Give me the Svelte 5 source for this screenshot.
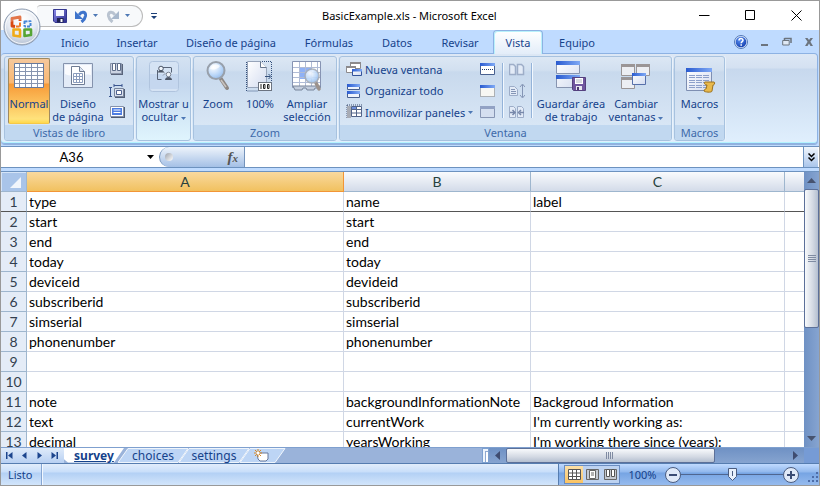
<script>
  const tabs = ['Inicio', 'Insertar', 'Diseño de página', 'Fórmulas', 'Datos', 'Revisar', 'Vista', 'Equipo'];
  const rows = [
    ['type', 'name', 'label'],
    ['start', 'start', ''],
    ['end', 'end', ''],
    ['today', 'today', ''],
    ['deviceid', 'devideid', ''],
    ['subscriberid', 'subscriberid', ''],
    ['simserial', 'simserial', ''],
    ['phonenumber', 'phonenumber', ''],
    ['', '', ''],
    ['', '', ''],
    ['note', 'backgroundInformationNote', 'Backgroud Information'],
    ['text', 'currentWork', "I'm currently working as:"],
    ['decimal', 'yearsWorking', "I'm working there since (years):"]
  ];
  let zoom = $state(50);
  let formula = $state('');
  let cellName = $state('A36');
</script>

<svg width="0" height="0" class="defs" aria-hidden="true">
  <defs>
    <linearGradient id="bar" x1="0" x2="1"><stop offset="0" stop-color="#2a5bd0" /><stop offset="1" stop-color="#7fa9f5" /></linearGradient>
    <linearGradient id="pane" x1="0" y1="0" x2="1" y2="1"><stop offset="0" stop-color="#fff" /><stop offset="1" stop-color="#d3dcf0" /></linearGradient>
    <linearGradient id="floppy" x1="0" y1="0" x2="1" y2="1"><stop offset="0" stop-color="#8d8bea" /><stop offset="1" stop-color="#2b2d8c" /></linearGradient>
    <radialGradient id="lens" cx=".35" cy=".3" r=".8"><stop offset="0" stop-color="#fff" /><stop offset=".6" stop-color="#b9d6f8" /><stop offset="1" stop-color="#8fb6e6" /></radialGradient>
    <radialGradient id="orb" cx=".5" cy=".3" r=".75"><stop offset="0" stop-color="#fff" /><stop offset=".55" stop-color="#e6ebf3" /><stop offset="1" stop-color="#a9b7cc" /></radialGradient>
    <radialGradient id="help" cx=".4" cy=".3" r=".8"><stop offset="0" stop-color="#5c93f5" /><stop offset="1" stop-color="#0d37a8" /></radialGradient>
  </defs>
</svg>

{#snippet arrow()}
  <svg class="arrow" width="5" height="3" viewBox="0 0 5 3" aria-hidden="true"><path d="M0 0h5L2.500 3z" fill="currentColor" /></svg>
{/snippet}

{#snippet lensIcon()}
  <path d="M18 19l6 9" stroke="#8d8784" stroke-width="4" stroke-linecap="round" />
  <path d="M18 20l5 7" stroke="#c9c4c0" stroke-width="1.500" />
  <circle cx="13" cy="10.500" r="8.500" fill="url(#lens)" stroke="#98a0ab" stroke-width="2" />
  <path d="M7 9c1-4 6-6 10-3-2 3-6 4-10 3z" fill="#fff" opacity=".7" />
{/snippet}

<div class="window">
  <header class="title">
    <div class="quick">
      <button aria-label="Guardar">
        <svg width="14" height="14" viewBox="0 0 14 14"><path d="M.5.5h13v13H2L.5 12z" fill="url(#floppy)" stroke="#34368f" /><path d="M3 1h8v6H3z" fill="#f5f7ff" /><path d="M4 9h6.500v4.500H4z" fill="#1e2050" /><path d="M7.500 10h2v3h-2z" fill="#fff" /></svg>
      </button>
      <button aria-label="Deshacer">
        <svg width="14" height="14" viewBox="0 0 14 14"><path d="M5 6C8 1.500 12 3 11.500 7c-.4 2.500-1.500 4-4 6" fill="none" stroke="#3e74cb" stroke-width="3" /><path d="M1 2v8h8z" fill="#3e74cb" /></svg>
      </button>
      <button class="drop" aria-label="Opciones de deshacer">{@render arrow()}</button>
      <button aria-label="Rehacer">
        <svg width="14" height="14" viewBox="0 0 14 14"><path d="M9 6C6 1.500 2 3 2.500 7c.4 2.500 1.500 4 4 6" fill="none" stroke="#b9c3d0" stroke-width="3" /><path d="M13 2v8H5z" fill="#a8b8cc" /></svg>
      </button>
      <button class="drop off" aria-label="Opciones de rehacer">{@render arrow()}</button>
    </div>
    <button class="more" aria-label="Personalizar barra">
      <svg width="6" height="6" viewBox="0 0 6 6"><path d="M0 0h6v1H0zM0 3h6L3 6z" fill="#1d3f77" /></svg>
    </button>
    <h1>BasicExample.xls - Microsoft Excel</h1>
    <div class="controls">
      <button aria-label="Minimizar"><svg width="11" height="11" viewBox="0 0 11 11"><path d="M0 5.500h10.500" stroke="#000" /></svg></button>
      <button aria-label="Maximizar"><svg width="11" height="11" viewBox="0 0 11 11"><path d="M.5.500h9v9h-9z" fill="none" stroke="#000" /></svg></button>
      <button aria-label="Cerrar"><svg width="11" height="11" viewBox="0 0 11 11"><path d="M.5.500l10 10M10.500.500l-10 10" stroke="#000" /></svg></button>
    </div>
  </header>

  <button class="office" aria-label="Botón de Office">
    <svg width="38" height="38" viewBox="0 0 38 38">
      <circle cx="19" cy="19" r="18" fill="url(#orb)" stroke="#8d9bb0" />
      <circle cx="19" cy="19" r="16.500" fill="none" stroke="#fff" opacity=".8" />
      <g fill="none" stroke-linejoin="round">
        <path d="M12 18.500l-3-.5v-7.500l8-1.500v4" stroke="#d9480f" stroke-width="2.800" />
        <path d="M13 18.500h4v-4" stroke="#ef7a26" stroke-width="2" />
        <path d="M21.500 13.500l6-.5v5.500h-6z" stroke="#4687d6" stroke-width="2" stroke-dasharray="3 1" />
        <path d="M10.500 21.500h6.500v7l-6.500-1z" stroke="#f0aa17" stroke-width="2.600" />
        <path d="M21.500 21.500h6.500V27l-6.500 1z" stroke="#56a534" stroke-width="2.600" />
      </g>
      <path d="M19 17v5M16.500 19.500h5" stroke="#fff" stroke-width="1.500" />
      <path d="M5 15c4-13 24-13 28 0-9-4-19-4-28 0z" fill="#fff" opacity=".25" />
    </svg>
  </button>

  <nav class="tabs">
    {#each tabs as tab}
      <button class:active={tab === 'Vista'}>{tab}</button>
    {/each}
    <div class="mdi">
      <button aria-label="Ayuda">
        <svg width="14" height="14" viewBox="0 0 14 14"><circle cx="7" cy="7" r="6.500" fill="#dbe8fa" stroke="#5279b8" /><circle cx="7" cy="7" r="5.300" fill="url(#help)" /><path d="M5 5.500C5 3 9 3 9 5.300 9 6.700 7.200 6.700 7.200 8.300M7.200 9.300v1.400" fill="none" stroke="#fff" stroke-width="1.500" /></svg>
      </button>
      <button aria-label="Minimizar libro"><svg width="10" height="10" viewBox="0 0 10 10"><path d="M1 7h7v2H1z" fill="#6c747e" /></svg></button>
      <button aria-label="Restaurar libro"><svg width="10" height="10" viewBox="0 0 10 10"><path d="M2.500 1.500h6.500v4.500M2.500 1v2" fill="none" stroke="#6c747e" stroke-width="1.500" /><path d="M.7 3.500h6.500v4.500H.7z" fill="#dfe9f5" stroke="#6c747e" /></svg></button>
      <button aria-label="Cerrar libro"><svg width="10" height="10" viewBox="0 0 10 10"><path d="M1 1h2.500L5 3 6.500 1H9L6.400 4.700 9 9H6.500L5 6.500 3.500 9H1l2.600-4.300z" fill="#6c747e" /></svg></button>
    </div>
  </nav>

  <div class="ribbon">
    <section class="group views">
      <div class="items">
        <button class="big on">
          <svg width="32" height="32" viewBox="0 0 32 32"><path d="M1.500 2.500h29v24h-29z" fill="#fff" stroke="#66799c" /><path d="M2 6.500h28M2 10.500h28M2 14.500h28M2 18.500h28M2 22.500h28M6.500 3v23M12.500 3v23M18.500 3v23M24.500 3v23" stroke="#8795b0" /></svg>
          <span>Normal</span>
        </button>
        <button class="big wide">
          <svg width="32" height="32" viewBox="0 0 32 32"><path d="M1.500 2.500h29v24h-29z" fill="#e3ebf7" stroke="#8593ad" /><path d="M3 4h26v10C20 12 10 17 3 13z" fill="#fff" opacity=".8" /><path d="M9.500 5.500h8l5 5v13h-13z" fill="#fff" stroke="#6f7c94" /><path d="M17.500 5.500v5h5" fill="#dde5f2" stroke="#6f7c94" /><path d="M11.500 12.500h9v9h-9zM11.500 15.500h9M11.500 18.500h9M14.500 12.500v9M17.500 12.500v9" fill="none" stroke="#8b9cbd" /></svg>
          <span>Diseño<br />de página</span>
        </button>
        <div class="stack">
          <button aria-label="Vista previa de salto de página"><svg width="16" height="16" viewBox="0 0 16 16"><path d="M2 3h12v11H2z" fill="#59647a" /><path d="M1.500 2.500h11v10h-11z" fill="#cbd3e2" stroke="#8994aa" /><path d="M3.500 2.500h3v7h-3zM8.500 2.500h3v7h-3z" fill="#fff" stroke="#5d6c88" /></svg></button>
          <button aria-label="Vistas personalizadas"><svg width="16" height="16" viewBox="0 0 16 16"><path d="M0 4.500h3M1.500 4v9M0 13.500h3M5 2.500h8M5 1v3M13 1v3" fill="none" stroke="#3c5790" /><path d="M6 6h10v9H6z" fill="#525f76" /><path d="M5.500 5.500h9v8h-9z" fill="#dbe2ee" stroke="#77849c" /><path d="M7.500 7.500h5v4h-5z" fill="#fff" stroke="#4f6390" /></svg></button>
          <button aria-label="Pantalla completa"><svg width="16" height="16" viewBox="0 0 16 16"><path d="M2 3h14v11H2z" fill="#4e5b72" /><path d="M1.500 2.500h13v10h-13z" fill="#fff" stroke="#8692ab" /><path d="M3 4h10v7H3z" fill="#4d7de2" /><path d="M4.500 6h7M4.500 8.500h7" stroke="#fff" /></svg></button>
        </div>
      </div>
      <h2>Vistas de libro</h2>
    </section>

    <section class="group show">
      <button class="big">
        <svg width="32" height="32" viewBox="0 0 32 32"><rect x="1.500" y=".5" width="29" height="30" rx="3" fill="#d5e3f4" stroke="#b0c4de" /><path d="M2 13h28v15H2z" fill="#bdd2ec" opacity=".7" /><path d="M9.500 9v9.500h4M23.500 6.500v5M14 6.500h9" fill="none" stroke="#586478" /><circle cx="13" cy="7.500" r="2.300" fill="#eef3f9" stroke="#4c5668" /><path d="M10 11.500c0-3 6-3 6 0z" fill="#4b5463" /><circle cx="20.500" cy="13.500" r="2.300" fill="#eef3f9" stroke="#7a8290" /><path d="M17 19c0-4 7-4 7 0z" fill="#4d5666" /><path d="M15 10.500l2 2-2 2" fill="none" stroke="#8b94a4" /></svg>
        <span>Mostrar u<br />ocultar {@render arrow()}</span>
      </button>
    </section>

    <section class="group zoomgroup">
      <div class="items">
        <button class="big"><svg width="32" height="32" viewBox="0 0 32 32"><g transform="translate(1 -1)">{@render lensIcon()}</g></svg><span>Zoom</span></button>
        <button class="big">
          <svg width="32" height="32" viewBox="0 0 32 32"><path d="M2.500 1v29H14M14 .5h13.500V20" fill="none" stroke="#35507c" stroke-dasharray="1 1" /><path d="M3.500.5h13l6 6v20h-19z" fill="url(#pane)" stroke="#97a4b9" /><path d="M16.500.5v6h6" fill="#fff" stroke="#68788f" /><path d="M21 15.500h5M24.500 13l2.500 2.500-2.500 2.500" fill="none" stroke="#35507c" /><rect x="14.500" y="21.500" width="13" height="8" fill="#fff" stroke="#6b7380" /><path d="M17 23v5M19.500 23.500H21v4h-1.500zM23.500 23.500H25v4h-1.500z" fill="none" stroke="#222" /></svg>
          <span>100%</span>
        </button>
        <button class="big wide">
          <svg width="32" height="32" viewBox="0 0 32 32"><path d="M1.500.5h28v26h-28z" fill="#fff" stroke="#8794b3" /><path d="M8 6h13v12H8z" fill="#8fb1f6" /><path d="M2 6.500h27M2 11.500h27M2 16.500h27M2 21.500h27M8.500 1v25M14.500 1v25M20.500 1v25M26.500 1v25" stroke="#b0bcd6" /><path d="M2 25h27v2h-5l-1 2h-7l-1-2h-3l-1 2H4z" fill="#c3cddd" stroke="#78859b" /><path d="M25 22l3 6" stroke="#9c928c" stroke-width="3.500" stroke-linecap="round" /><circle cx="21" cy="15" r="7" fill="url(#lens)" stroke="#a6adb8" stroke-width="1.500" opacity=".9" /></svg>
          <span>Ampliar<br />selección</span>
        </button>
      </div>
      <h2>Zoom</h2>
    </section>

    <section class="group windows">
      <div class="items">
        <div class="stack text">
          <button><svg width="16" height="16" viewBox="0 0 16 16"><path d="M4.500 1.500h10v6h-10z" fill="#fff" stroke="#8c8a8c" /><path d="M4 1h11v2H4z" fill="#8c8a8c" /><path d="M.5 5.500h9v6h-9z" fill="#fff" stroke="#8c8a8c" /><path d="M0 5h10v2H0z" fill="#8c8a8c" /><path d="M6.500 8.500h9v6h-9z" fill="url(#pane)" stroke="#34549b" /><path d="M6 8h10v2.500H6z" fill="url(#bar)" /></svg>Nueva ventana</button>
          <button><svg width="16" height="16" viewBox="0 0 16 16"><path d="M1.500 1.500h12v5h-12zM1.500 8.500h12v6h-12z" fill="#eef3fc" stroke="#49608f" /><path d="M1 1h13v3H1zM1 8h13v3H1z" fill="url(#bar)" /></svg>Organizar todo</button>
          <button><svg width="16" height="16" viewBox="0 0 16 16"><path d="M1 1h15M1 1v14" stroke="#3c4d70" stroke-dasharray="1 1" /><path d="M1 2h4v12H1z" fill="#a8acb5" /><path d="M5.500 2.500h10v10h-10zM5.500 5.500h10M5.500 9h10M10.500 2.500v10" fill="#fff" stroke="#526488" /><path d="M6 3h4v2H6z" fill="#6e8fdc" /></svg>Inmovilizar paneles {@render arrow()}</button>
        </div>
        <div class="stack">
          <button aria-label="Dividir"><svg width="16" height="16" viewBox="0 0 16 16"><path d="M.5 2.500h14v11H.5z" fill="#fff" stroke="#48608f" /><path d="M0 2h15v3H0z" fill="url(#bar)" /><path d="M2 8.500h12" stroke="#233d70" stroke-dasharray="1 1" /></svg></button>
          <button aria-label="Ocultar"><svg width="16" height="16" viewBox="0 0 16 16"><path d="M.5 2.500h14v11H.5z" fill="#f7f7f3" stroke="#777" stroke-dasharray="1 1" /><path d="M0 2h15v3H0z" fill="url(#bar)" /></svg></button>
          <button aria-label="Mostrar" disabled><svg width="16" height="16" viewBox="0 0 16 16"><path d="M.5 2.500h14v11H.5z" fill="#d4dff0" stroke="#8796b4" /><path d="M0 2h15v3H0z" fill="#92a2c4" /></svg></button>
        </div>
        <hr />
        <div class="stack">
          <button aria-label="Ver en paralelo" disabled><svg width="16" height="16" viewBox="0 0 16 16"><path d="M.5 3.500h4l2 2v8h-6zM8.500 3.500h4l2 2v8h-6z" fill="#e3ebf7" stroke="#9dadc8" stroke-width="1.500" /></svg></button>
          <button aria-label="Desplazamiento sincrónico" disabled><svg width="16" height="16" viewBox="0 0 16 16"><path d="M.5 3.500h5l3 3v6h-8z" fill="#e3ebf7" stroke="#9dadc8" /><path d="M2 6.500h4M2 8.500h5M2 10.500h5M11 4l2.500-3L16 4M11 12l2.500 3 2.500-3M13.500 2v12" fill="none" stroke="#8495b5" /></svg></button>
          <button aria-label="Restablecer posición" disabled><svg width="16" height="16" viewBox="0 0 16 16"><path d="M.5 2.500h4l2 2v9h-6zM8.500 2.500h4l2 2v9h-6z" fill="#e3ebf7" stroke="#9dadc8" /><path d="M1 8.500h4M3.500 6L6 8.500 3.500 11M15 8.500h-4M12 6L9.500 8.500 12 11" fill="none" stroke="#7788aa" stroke-width="1.500" /></svg></button>
        </div>
        <hr />
        <button class="big area">
          <svg width="32" height="32" viewBox="0 0 32 32"><path d="M1.500.5h23v12h-23zM1.500 14.500h23v12h-23z" fill="url(#pane)" stroke="#8794b0" /><path d="M1 0h24v4H1zM1 14h24v4H1z" fill="url(#bar)" /><path d="M17.500 16.500h13v13h-12l-1-1z" fill="#70569f" stroke="#54407e" /><path d="M20 17h8v6h-8z" fill="#fff" /><path d="M21 19h6M21 21h6" stroke="#b2b6c2" /><path d="M21 25h6v4h-6z" fill="#e8e8f0" /><path d="M22 26h2v3h-2z" fill="#4b3970" /></svg>
          <span>Guardar área<br />de trabajo</span>
        </button>
        <button class="big switch">
          <svg width="32" height="32" viewBox="0 0 32 32"><path d="M1.500 3.500h13v11h-13zM16.500 3.500h13v11h-13zM1.500 16.500h13v11h-13z" fill="#eceef3" stroke="#9a9596" /><path d="M1 3h14v3H1zM16 3h14v3H16zM1 16h14v3H1z" fill="#9a9596" /><path d="M12.500 12.500h13v11h-13z" fill="url(#pane)" stroke="#5770aa" /><path d="M12 12h14v3H12z" fill="url(#bar)" /></svg>
          <span>Cambiar<br />ventanas {@render arrow()}</span>
        </button>
      </div>
      <h2>Ventana</h2>
    </section>

    <section class="group macros">
      <div class="items">
        <button class="big">
          <svg width="32" height="32" viewBox="0 0 32 32"><path d="M2.500 7.500h25v22h-25z" fill="url(#pane)" stroke="#7e8fb2" /><path d="M2 7h26v4H2z" fill="url(#bar)" /><path d="M5 14.500h20M5 16.500h20M5 19.500h20M5 21.500h20M5 24.500h20M5 26.500h20" stroke="#8c9fca" stroke-dasharray="6 1" /><path d="M21 21h9c1 0 1 3-1 3l-1 6c0 2-8 1-8 0 0-2 2-2 2-2l1-4c-3 0-3-3-2-3z" fill="#e8b94c" stroke="#9a711e" /></svg>
          <span>Macros<br />{@render arrow()}</span>
        </button>
      </div>
      <h2>Macros</h2>
    </section>
  </div>

  <div class="formula">
    <div class="namebox">
      <input aria-label="Cuadro de nombres" bind:value={cellName} />
      <button aria-label="Lista de nombres"><svg width="7" height="4" viewBox="0 0 7 4"><path d="M0 0h7L3.500 4z" /></svg></button>
    </div>
    <div class="fx"><i class="knob"></i><button aria-label="Insertar función"><i>f</i><small>x</small></button></div>
    <input class="entry" aria-label="Barra de fórmulas" bind:value={formula} />
    <button class="expand" aria-label="Expandir barra de fórmulas"><svg width="7" height="9" viewBox="0 0 7 9"><path d="M.5.500l3 3 3-3M.5 4.500l3 3 3-3" fill="none" stroke="#000" stroke-width="1.500" /></svg></button>
  </div>

  <main class="body">
    <div class="sheet">
      <table>
        <colgroup><col class="c0" /><col class="ca" /><col class="cb" /><col class="cc" /><col /></colgroup>
        <thead>
          <tr>
            <th class="corner" aria-label="Seleccionar todo"><svg width="12" height="12" viewBox="0 0 12 12"><path d="M11 0v11H0z" fill="#f1f5fb" /></svg></th>
            <th class="sel">A</th><th>B</th><th>C</th><th aria-label="D"></th>
          </tr>
        </thead>
        <tbody>
          {#each rows as row, i}
            <tr class:frozen={i === 0}>
              <th>{i + 1}</th>
              {#each row as cell}<td>{cell}</td>{/each}
              <td></td>
            </tr>
          {/each}
        </tbody>
      </table>
    </div>
    <div class="vscroll">
      <button aria-label="Arriba"><svg width="9" height="5" viewBox="0 0 9 5"><path d="M0 5h9L4.500 0z" fill="#47536f" /></svg></button>
      <div class="thumb"><i></i></div>
      <div class="space"></div>
      <button aria-label="Abajo"><svg width="9" height="5" viewBox="0 0 9 5"><path d="M0 0h9L4.500 5z" fill="#47536f" /></svg></button>
    </div>
  </main>

  <div class="bottom">
    <div class="nav">
      <button aria-label="Primera hoja"><svg width="7" height="7" viewBox="0 0 7 7"><path d="M0 0h1.500v7H0zM6.500 0v7L2 3.500z" /></svg></button>
      <button aria-label="Hoja anterior"><svg width="7" height="7" viewBox="0 0 7 7"><path d="M5.500 0v7L1 3.500z" /></svg></button>
      <button aria-label="Hoja siguiente"><svg width="7" height="7" viewBox="0 0 7 7"><path d="M1.500 0v7L6 3.500z" /></svg></button>
      <button aria-label="Última hoja"><svg width="7" height="7" viewBox="0 0 7 7"><path d="M5.500 0H7v7H5.500zM.5 0v7L5 3.500z" /></svg></button>
    </div>
    <div class="sheets">
      <button class="current"><svg viewBox="0 0 60 16" preserveAspectRatio="none"><path d="M0 0h60L50 15.500H4L0 12z" fill="#fff" /></svg><span>survey</span></button>
      <button><svg viewBox="0 0 70 16" preserveAspectRatio="none"><path d="M10 .5h60L60 15.500H0z" fill="#bdd5f5" stroke="#f4f8fd" /></svg><span>choices</span></button>
      <button><svg viewBox="0 0 70 16" preserveAspectRatio="none"><path d="M10 .5h60L60 15.500H0z" fill="#bdd5f5" stroke="#f4f8fd" /></svg><span>settings</span></button>
      <button class="new" aria-label="Insertar hoja">
        <svg viewBox="0 0 46 16" preserveAspectRatio="none"><path d="M10 .5h35L35 15.500H0z" fill="#bdd5f5" stroke="#f4f8fd" /></svg>
        <svg class="glyph" width="15" height="13" viewBox="0 0 15 13"><path d="M3 4h11v6l-2 2H6l-2-2z" fill="#fff" stroke="#66789b" /><path d="M4 0v8M0 4h8M1 1l6 6M7 1L1 7" stroke="#d98a27" /><circle cx="4" cy="4" r="1.500" fill="#fff" /></svg>
      </button>
    </div>
    <div class="split"></div>
    <div class="hscroll">
      <button aria-label="Izquierda"><svg width="5" height="9" viewBox="0 0 5 9"><path d="M5 0v9L0 4.500z" fill="#3f4c70" /></svg></button>
      <div class="thumb"><i></i></div>
      <div class="space"></div>
      <button aria-label="Derecha"><svg width="5" height="9" viewBox="0 0 5 9"><path d="M0 0v9l5-4.500z" fill="#3f4c70" /></svg></button>
    </div>
    <div class="end"></div>
  </div>

  <footer class="status">
    <span class="ready">Listo</span>
    <div class="tools">
      <div class="modes">
        <button class="on" aria-label="Normal"><svg width="13" height="11" viewBox="0 0 13 11"><path d="M.5.500h12v10H.5zM.5 4h12M.5 7.500h12M4.500.500v10M8.500.500v10" fill="#fff" stroke="#555" /></svg></button>
        <button aria-label="Diseño de página"><svg width="13" height="11" viewBox="0 0 13 11"><path d="M.5.500h12v10H.5z" fill="#c4c9d1" stroke="#666" /><path d="M3.500 1.500h6v8h-6z" fill="#fff" stroke="#666" /><path d="M5 4h3M5 6h3" stroke="#666" /></svg></button>
        <button aria-label="Salto de página"><svg width="13" height="11" viewBox="0 0 13 11"><path d="M.5.500h12v10H.5z" fill="#c4c9d1" stroke="#666" /><path d="M2.500.500h3v7h-3zM7.500.500h3v7h-3z" fill="#fff" stroke="#555" /></svg></button>
      </div>
      <button class="percent">100%</button>
      <button class="round" aria-label="Alejar"><svg width="16" height="16" viewBox="0 0 16 16"><circle cx="8" cy="8" r="7.500" fill="#dfe9f8" stroke="#4a5c80" /><path d="M4 8h8" stroke="#3a4c74" stroke-width="2" /></svg></button>
      <input type="range" aria-label="Zoom" min="0" max="100" bind:value={zoom} />
      <button class="round" aria-label="Acercar"><svg width="16" height="16" viewBox="0 0 16 16"><circle cx="8" cy="8" r="7.500" fill="#dfe9f8" stroke="#4a5c80" /><path d="M4 8h8M8 4v8" stroke="#3a4c74" stroke-width="2" /></svg></button>
      <svg class="grip" width="11" height="11" viewBox="0 0 11 11" aria-hidden="true"><path d="M8 0h2v2H8zM4 4h2v2H4zM8 4h2v2H8zM0 8h2v2H0zM4 8h2v2H4zM8 8h2v2H8z" fill="#4d6da8" /></svg>
    </div>
  </footer>
</div>

<style>
  :global(body) { overflow: hidden; }
  * { box-sizing: border-box; }
  button, input { font: inherit; color: inherit; margin: 0; padding: 0; border: 0; background: none; min-width: 0; }
  h1, h2 { margin: 0; font-size: inherit; font-weight: normal; }
  svg { display: block; flex: none; }
  .defs { position: absolute; }
  .window {
    position: relative; display: flex; flex-direction: column; height: 100vh;
    border: 1px solid #999; background: #bfdbff; overflow: hidden;
    font: 11px/16px "Noto Sans", "Open Sans", sans-serif; color: #15428b;
  }

  .title { display: flex; align-items: center; height: 29px; background: #fff; color: #000; flex: none; }
  .quick {
    display: flex; align-items: center; gap: 7px; height: 22px; width: 106px; margin-left: 36px; padding-left: 16px;
    border: 1px solid #bbb; border-left: 0; border-radius: 4px 12px 12px 0; background: #f7f9fb;
  }
  .quick .drop { margin: 0 1px 0 -2px; color: #4a78b8; }
  .quick .drop.off { color: #b5b5b5; margin-left: -2px; }
  .more { margin-left: 8px; }
  h1 { flex: 1; padding-left: 165px; white-space: nowrap; }
  .controls { display: flex; }
  .controls button { width: 46px; height: 28px; display: grid; place-items: center; }

  .office { position: absolute; left: 2px; top: 7px; z-index: 2; }

  .tabs { display: grid; grid-template-columns: 56px 68px 120px 76px 60px 66px 50px 68px 1fr; height: 23px; padding-left: 46px; flex: none; }
  .tabs > button { white-space: nowrap; padding-top: 2px; }
  .tabs .active { border: 1px solid #8db2e3; border-bottom: 0; border-radius: 4px 4px 0 0; background: linear-gradient(#fff, #e3edf9); box-shadow: inset 1px 1px #b9f1fb, inset -1px 0 #b9f1fb; margin-bottom: -1px; z-index: 1; padding-top: 0; }
  .mdi { display: flex; justify-content: flex-end; align-items: center; gap: 12px; padding-right: 5px; }

  .ribbon {
    display: flex; gap: 2px; height: 91px; padding: 2px 3px; flex: none; margin-right: 1px;
    border: 1px solid #8db2e3; border-left-width: 0; border-radius: 4px; box-shadow: inset 0 -1px #b4f4ff, 0 1px #92b2dc;
    background: linear-gradient(#dde8f5 0, #d4e1f1 14px, #c7d8ed 15px, #e0effd 100%);
    line-height: 13px;
  }
  .group {
    display: flex; flex-direction: column; flex: none; height: 85px; overflow: hidden;
    border: 1px solid #a7c2df; border-radius: 3px; box-shadow: 1px 0 #e9f2fb;
    background: linear-gradient(#dce7f4 0, #d2e0f0 13px, #c8d9ed 15px, #d8e6f5 68px);
  }
  .group h2 { margin-top: auto; height: 16px; line-height: 15px; text-align: center; background: #c1d8f0; color: #3e6aaa; }
  .views { width: 130px; }
  .show { width: 55px; background: linear-gradient(#d4e2f2 0, #c4d7ee 26px, #dff4fd); }
  .zoomgroup { width: 144px; }
  .windows { width: 333px; }
  .macros { width: 51px; }
  .items { display: flex; height: 68px; padding: 1px 3px; }
  .show .big { margin-top: 1px; width: 100%; }
  .big { display: flex; flex-direction: column; align-items: center; width: 42px; height: 66px; padding-top: 3px; flex: none; white-space: nowrap; }
  .big span { margin-top: 4px; text-align: center; }
  .big.wide { width: 52px; }
  .big.on { border: 1px solid #a08a60; border-bottom-color: #f5c84a; padding-top: 2px; border-radius: 2px; background: linear-gradient(#f5c89c, #f9b873 24px, #f79a38 25px, #ffe27c 60px, #ffd84a); }
  .views .wide { margin-left: 2px; }
  .big .arrow, .stack .arrow { display: inline-block; vertical-align: middle; }
  .arrow { color: #4d78b5; }
  .macros .items { padding: 1px 0; }
  .macros .big { width: 49px; }
  .big.area { width: 72px; margin-left: 2px; }
  .big.switch { width: 58px; }
  .stack { display: flex; flex-direction: column; justify-content: space-between; margin-left: 5px; padding: 3px 0 4px; height: 66px; flex: none; }
  .stack button { display: flex; align-items: center; gap: 3px; height: 16px; white-space: nowrap; }
  .stack.text { width: 129px; margin-left: 3px; }
  hr { width: 2px; height: 55px; margin: 5px 0 0 6px; border: 0; border-left: 1px solid #94b3d9; background: #f2f8ff; flex: none; }

  .formula { display: flex; height: 22px; margin-top: 2px; border: solid #6d92bf; border-width: 1px 0; background: #fff; flex: none; color: #000; font-family: Lato, sans-serif; font-size: 13px; }
  .namebox { display: flex; width: 158px; }
  .namebox input { width: 141px; text-align: center; }
  .namebox button { width: 17px; display: grid; place-items: center; }
  .fx { display: flex; justify-content: space-between; align-items: center; width: 86px; padding: 0 6px 0 5px; border: 1px solid #7493bb; border-width: 0 1px; border-radius: 10px 0 0 10px; background: linear-gradient(#eef4fb, #a4c0e6); }
  .knob { width: 8px; height: 8px; border-radius: 50%; background: linear-gradient(135deg, #9da3ad, #fff); }
  .fx button { font: bold 15px/16px "Liberation Serif", serif; color: #555; }
  .fx small { font-size: 11px; font-style: italic; }
  .entry { flex: 1; padding: 0 4px; outline: none; }
  .expand { width: 15px; margin-right: 1px; display: grid; place-items: center; border-left: 1px solid #6d92bf; background: linear-gradient(#f1f6fc, #a9c5eb); }

  .body { display: flex; flex: 1; min-height: 0; margin-top: 3px; border-top: 1px solid #6d92bf; }
  .sheet { flex: 1; min-width: 0; overflow: hidden; background: #fff; }
  table { width: 100%; table-layout: fixed; border-collapse: separate; border-spacing: 0; font: 14px/19px Lato, sans-serif; font-variant-ligatures: none; color: #000; }
  .c0 { width: 26px; }
  .ca { width: 317px; }
  .cb { width: 187px; }
  .cc { width: 254px; }
  td, th { height: 20px; padding: 0 2px; font-weight: normal; white-space: nowrap; border: solid #d0d7e5; border-width: 0 1px 1px 0; }
  tbody th { background: #e4ecf7; border-color: #9eb6ce; padding: 0; color: #333f4f; }
  thead th { background: linear-gradient(#f9fbfd, #d3dbe9); border-color: #9eb6ce; color: #27413e; }
  thead .sel { background: linear-gradient(#f9d99f, #f1c15f); border-color: #f29536; }
  thead .corner { background: #a9c4e9; box-shadow: inset 1px 1px #d5e4f7; padding: 3px 4px 0 9px; }
  .frozen td, .frozen th { border-bottom-color: #555; }
  td:last-child, th:last-child { border-right: 0; }

  .vscroll { display: flex; flex-direction: column; width: 15px; background: linear-gradient(90deg, #6f91c4, #86a4d0); flex: none; }
  .vscroll button { height: 17px; display: grid; place-items: center; flex: none; }
  .thumb { display: grid; place-items: center; border: 1px solid #5c7099; border-radius: 2px; }
  .vscroll .thumb { flex: 138; background: linear-gradient(90deg, #f8fafc, #d3d9e3 60%, #b4bfd0); }
  .vscroll .space { flex: 103; }
  .vscroll i { width: 8px; height: 7px; background: repeating-linear-gradient(#7f8ba2 0 1px, transparent 1px 2px); }

  .bottom { display: flex; height: 16px; border-top: 1px solid #7fa0cf; background: #9ab3da; flex: none; font: 12px/15px "Noto Sans", sans-serif; }
  .nav { display: flex; width: 63px; padding-left: 1px; background: linear-gradient(#dfebfa, #b8d0f2); fill: #1c458d; }
  .nav button { width: 15px; display: grid; place-items: center; }
  .sheets { display: flex; flex: 1; min-width: 0; }
  .sheets button { position: relative; flex: none; width: 70px; margin-right: -9px; }
  .sheets .current { width: 60px; margin-right: -6px; font-weight: bold; text-decoration: underline; z-index: 1; }
  .sheets svg { position: absolute; inset: 0; width: 100%; height: 100%; }
  .sheets span { position: relative; }
  .sheets .new { width: 46px; margin: 0; }
  .sheets .glyph { inset: 1px auto auto 14px; width: 15px; height: 13px; }
  .split { width: 7px; border: 1px solid #7da0d0; background: #fff; box-shadow: inset 2px 2px #eef4fc, inset 3px 3px #8fa9d0; }
  .hscroll { display: flex; width: 315px; background: linear-gradient(#6f91c4, #86a4d0); }
  .hscroll button { width: 17px; display: grid; place-items: center; flex: none; }
  .hscroll .thumb { flex: 208; background: linear-gradient(#f8fafc, #d3d9e3 60%, #b4bfd0); }
  .hscroll .space { flex: 73; }
  .hscroll i { width: 8px; height: 7px; background: repeating-linear-gradient(90deg, #7f8ba2 0 1px, transparent 1px 2px); }
  .end { width: 15px; background: #769bd5; }

  .status { display: flex; justify-content: space-between; height: 22px; border-top: 1px solid #567db0; background: linear-gradient(#e2edfb, #c8defa 8px, #b3d0f5 9px, #d2e5fb); flex: none; line-height: 21px; }
  .ready { width: 41px; padding-left: 7px; border-right: 1px solid #86a6d3; box-shadow: 1px 0 #f2f8ff; }
  .tools { display: flex; align-items: center; width: 261px; padding-left: 5px; border-left: 1px solid #567db0; background: linear-gradient(#c0daff, #91b8ed 8px, #76a4e3 9px, #96bbee); }
  .modes { display: flex; border: 1px solid #6a8cc0; height: 19px; }
  .modes button { width: 18px; display: grid; place-items: center; background: #bdd2f0; }
  .modes .on { background: linear-gradient(#fbe0a8, #fbc362); }
  .percent { width: 45px; text-align: center; }
  input[type='range'] { -webkit-appearance: none; appearance: none; width: 102px; height: 16px; flex: none; background: linear-gradient(#4f6690, #4f6690) center / 100% 1px no-repeat; }
  input[type='range']::-webkit-slider-thumb {
    -webkit-appearance: none; width: 9px; height: 13px;
    background: url("data:image/svg+xml,%3Csvg xmlns='http://www.w3.org/2000/svg' width='9' height='13'%3E%3Cpath d='M.5.5h8v8l-4 4-4-4z' fill='%23e8f0fb' stroke='%234a5c80'/%3E%3Cpath d='M4.500 3v5' stroke='%234a5c80'/%3E%3C/svg%3E") no-repeat;
  }
  .grip { margin: 6px 0 0 auto; }
</style>
